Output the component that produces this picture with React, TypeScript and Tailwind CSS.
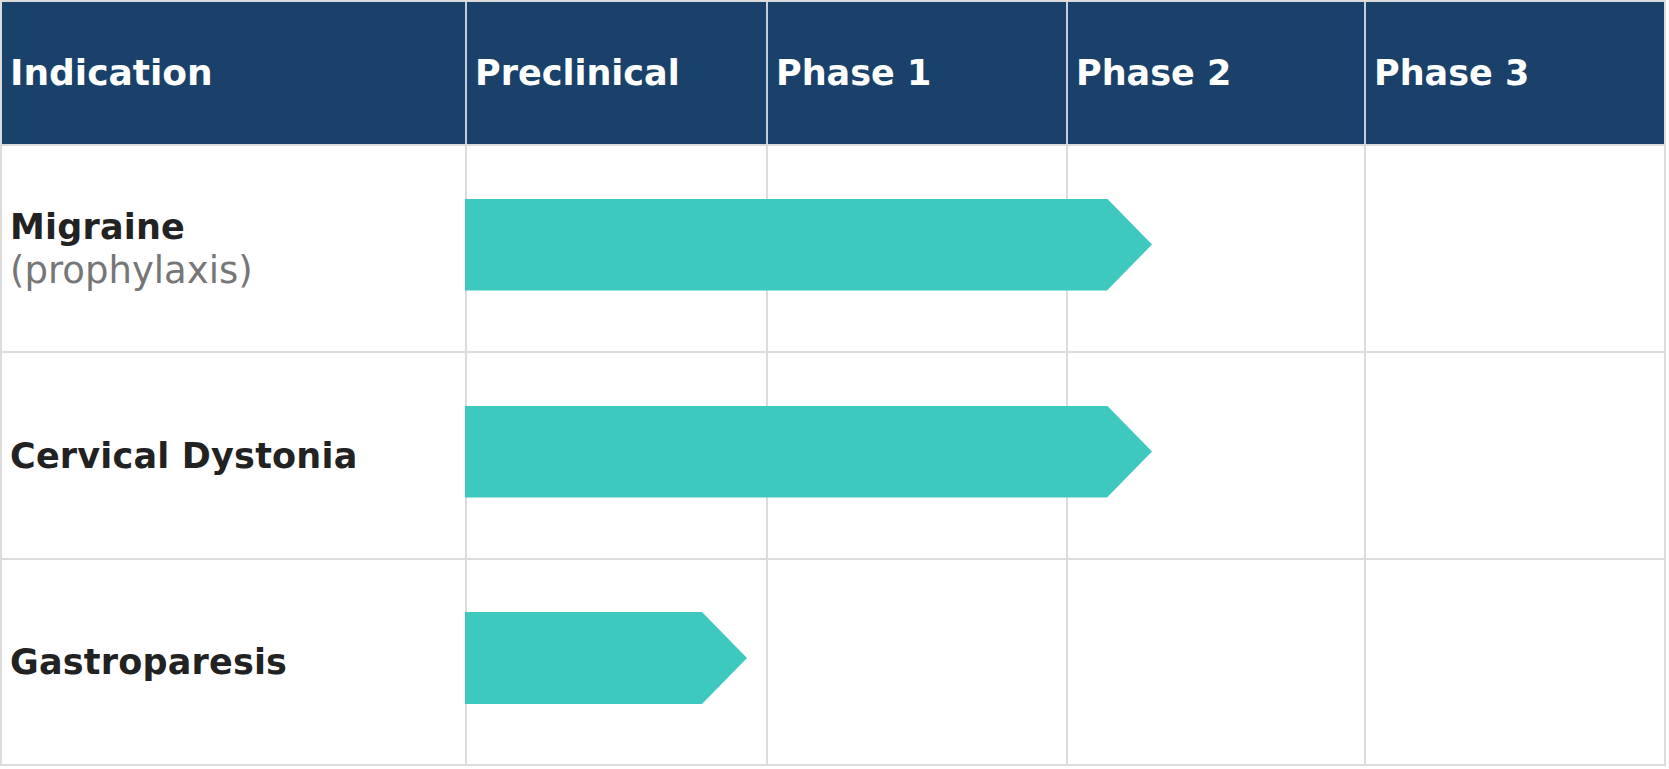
const COLS = "grid grid-cols-[463px_301px_300px_298px_300px]";

const phases = ["Preclinical", "Phase 1", "Phase 2", "Phase 3"];

const rows = [
  { name: "Migraine", note: "(prophylaxis)", bar: 687, h: "h-[207px]" },
  { name: "Cervical Dystonia", note: null, bar: 687, h: "h-[207px]" },
  { name: "Gastroparesis", note: null, bar: 282, h: "h-[206px]" },
];

function Bar({ width }: { width: number }) {
  return (
    <div
      className="col-start-2 col-span-4 row-start-1 self-center mb-[8px] h-[92px] bg-[#3dc9bf] [clip-path:polygon(0_0,calc(100%-45px)_0,100%_50%,calc(100%-45px)_100%,0_100%)]"
      style={{ width }}
    />
  );
}

export default function App() {
  return (
    <div className="w-[1666px] bg-white border-2 border-[#dcdcdc] font-['DejaVu_Sans',sans-serif]">
      {/* Header */}
      <div className={`${COLS} h-[142px] bg-[#1a416a]`}>
        <div className="flex items-center pl-[8px] text-[36px] font-bold text-white">
          Indication
        </div>
        {phases.map((p) => (
          <div
            key={p}
            className="flex items-center pl-[8px] border-l-2 border-[#c3cdd9] text-[35px] font-bold text-white"
          >
            {p}
          </div>
        ))}
      </div>

      {/* Body rows */}
      {rows.map((r) => (
        <div key={r.name} className={`${COLS} ${r.h} border-t-2 border-[#dcdcdc]`}>
          <div className="row-start-1 col-start-1 flex flex-col justify-center pl-[8px]">
            <span className="text-[35px] leading-[44px] tracking-[0.2px] font-bold text-[#222222]">
              {r.name}
            </span>
            {r.note && (
              <span className="text-[37px] leading-[44px] text-[#767676]">
                {r.note}
              </span>
            )}
          </div>
          <div className="row-start-1 col-start-2 border-l-2 border-[#dcdcdc]" />
          <div className="row-start-1 col-start-3 border-l-2 border-[#dcdcdc]" />
          <div className="row-start-1 col-start-4 border-l-2 border-[#dcdcdc]" />
          <div className="row-start-1 col-start-5 border-l-2 border-[#dcdcdc]" />
          <Bar width={r.bar} />
        </div>
      ))}
    </div>
  );
}
